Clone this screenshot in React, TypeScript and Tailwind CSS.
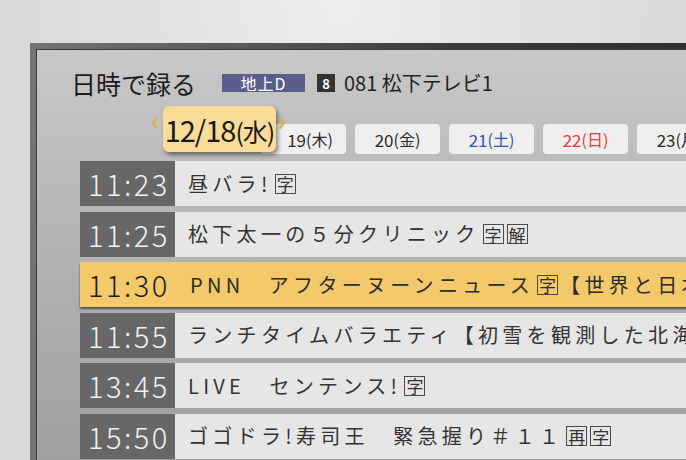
import React from 'react';

type Row = { time: string; title: string; marks?: string[]; rest?: string; active?: boolean };

const ROWS: Row[] = [
  { time: '11:23', title: '昼バラ!', marks: ['字'] },
  { time: '11:25', title: '松下太一の５分クリニック', marks: ['字', '解'] },
  { time: '11:30', title: 'PNN　アフターヌーンニュース', marks: ['字'], rest: '【世界と日本の話題', active: true },
  { time: '11:55', title: 'ランチタイムバラエティ【初雪を観測した北海道' },
  { time: '13:45', title: 'LIVE　センテンス!', marks: ['字'] },
  { time: '15:50', title: 'ゴゴドラ!寿司王　緊急握り＃１１', marks: ['再', '字'] },
];

const DAYS = [
  { id: 19, label: '19', wd: '木', color: 'text-[#2a2a2a]' },
  { id: 20, label: '20', wd: '金', color: 'text-[#2a2a2a]' },
  { id: 21, label: '21', wd: '土', color: 'text-[#2f55b5]' },
  { id: 22, label: '22', wd: '日', color: 'text-[#ec3b3b]' },
  { id: 23, label: '23', wd: '月', color: 'text-[#2a2a2a]' },
];

function Mark({ ch, first }: { ch: string; first: boolean }) {
  return (
    <span
      className={`inline-flex items-center justify-center w-[21px] h-[20px] border border-[#4a4a4a] text-[17px] leading-none tracking-normal shrink-0 ${
        first ? 'ml-[3px]' : 'ml-[1px]'
      } mr-[2px]`}
    >
      {ch}
    </span>
  );
}

function Chevron({ dir }: { dir: 'left' | 'right' }) {
  return (
    <svg width="8" height="12" viewBox="0 0 8 12" className="absolute top-[11px]" style={dir === 'left' ? { left: -12 } : { right: -10 }}>
      <polyline
        points={dir === 'left' ? '6,1 2,6 6,11' : '2,1 6,6 2,11'}
        fill="none"
        stroke="#dcb04a"
        strokeWidth="2.2"
        strokeLinecap="round"
        strokeLinejoin="round"
      />
    </svg>
  );
}

export default function App() {
  return (
    <div className="w-[686px] h-[460px] overflow-hidden bg-[radial-gradient(ellipse_at_50%_0%,#ededed,#d9d9d9_70%)] font-['Noto_Sans_CJK_JP',sans-serif] pt-[43px] pl-[30px]">
      <div className="w-[700px] h-[430px] bg-[linear-gradient(to_right,#747474,#3c3c3c_60%,#2e2e2e)] pl-[6px] pt-[6px]">
        <div className="h-full border-l border-t border-[#3a3a3a] bg-[linear-gradient(to_bottom,#c8c8c8,#b4b4b4_45%,#9e9e9e)]">
          {/* header */}
          <div className="flex items-center h-[28px] mt-[19px] pl-[34px]">
            <span className="text-[25px] text-[#1c1c1c] leading-none">日時で録る</span>
            <span className="ml-[26px] w-[83px] h-[18px] bg-[#5a5e8c] text-white text-[16px] leading-none flex items-center justify-center tracking-[1px]">
              地上D
            </span>
            <span className="ml-[12px] w-[18px] h-[18px] bg-[#333] text-white text-[13px] font-bold leading-none flex items-center justify-center">
              8
            </span>
            <span className="ml-[9px] text-[20px] text-[#222] leading-none">081 松下テレビ1</span>
          </div>

          {/* date tabs */}
          <div className="flex items-end mt-[9px] pl-[126px] h-[48px]">
            <div className="relative z-10 w-[113px] h-[46px] mb-[2px] rounded-[6px] bg-[#f8dc98] shadow-[2px_3px_4px_rgba(0,0,0,0.45)] flex items-center justify-center">
              <Chevron dir="left" />
              <span className="text-[29px] text-[#1a1a1a] leading-none tracking-[-1px]">
                12/18<span className="text-[25px] tracking-[-1px]">(水)</span>
              </span>
              <Chevron dir="right" />
            </div>
            <div className="flex gap-[9px] -ml-[15px]">
              {DAYS.map(({ id, label, wd, color }) => (
                <div
                  key={id}
                  className={`w-[85px] h-[30px] rounded-[4px] bg-[#efefef] flex items-center justify-center text-[17px] leading-none shrink-0 ${color} ${
                    id === 19 ? 'pl-[13px]' : ''
                  }`}
                >
                  {label}
                  <span className="text-[16px]">({wd})</span>
                </div>
              ))}
            </div>
          </div>

          {/* program list */}
          <div className="flex flex-col gap-[5.6px] mt-[7px] ml-[43px]">
            {ROWS.map((r) =>
              r.active ? (
                <div
                  key={r.time}
                  className="h-[45px] flex items-center bg-[#f3c96a] shadow-[0_2px_2px_rgba(0,0,0,0.55)] whitespace-nowrap overflow-hidden relative z-10"
                >
                  <span className="w-[95px] pl-[8px] text-[29px] font-light text-[#1c1c1c] leading-none tracking-[2.5px] shrink-0">
                    {r.time}
                  </span>
                  <span className="pl-[15px] flex items-center text-[20px] text-[#2c2c2c] tracking-[4.3px] leading-none">
                    {r.title}
                    {r.marks?.map((m, i) => <Mark key={m} ch={m} first={i === 0} />)}
                    {r.rest}
                  </span>
                </div>
              ) : (
                <div key={r.time} className="h-[45px] flex whitespace-nowrap overflow-hidden">
                  <span className="w-[95px] bg-[#676767] pl-[8px] flex items-center text-[29px] font-light text-[#f2f2f2] leading-none tracking-[2.5px] shrink-0">
                    {r.time}
                  </span>
                  <span className="flex-1 bg-[#e6e6e6] pl-[13px] flex items-center text-[20px] text-[#333] tracking-[4.3px] leading-none">
                    {r.title}
                    {r.marks?.map((m, i) => <Mark key={m} ch={m} first={i === 0} />)}
                    {r.rest}
                  </span>
                </div>
              )
            )}
          </div>
        </div>
      </div>
    </div>
  );
}
